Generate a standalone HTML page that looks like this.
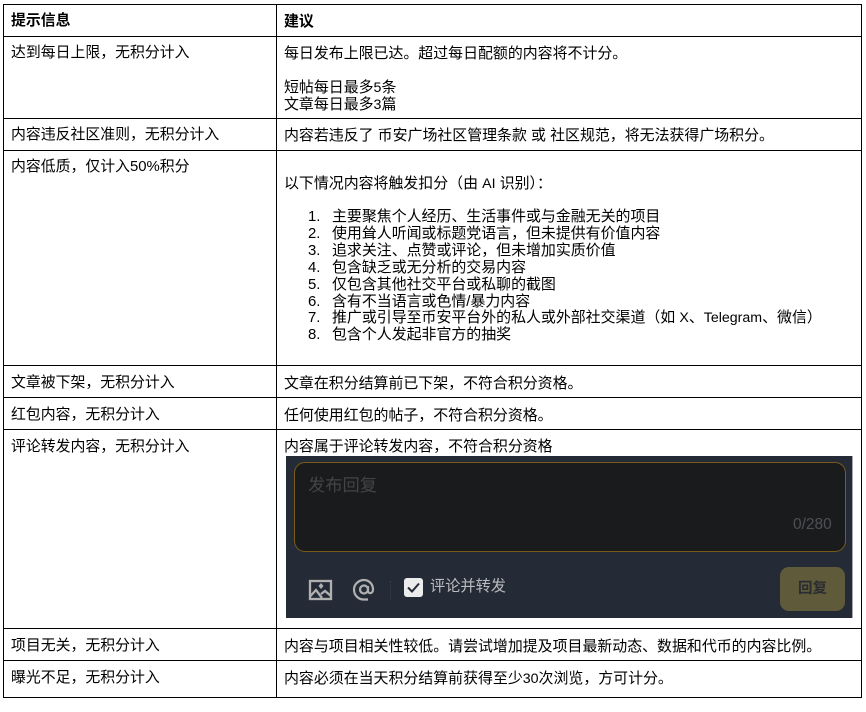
<!DOCTYPE html>
<html lang="zh-CN"><head><meta charset="utf-8"><title>提示信息</title>
<style>
html,body{margin:0;padding:0;background:#fff;}
body{width:866px;height:712px;position:relative;overflow:hidden;font-family:"Liberation Sans","Noto Sans CJK SC",sans-serif;font-size:14.93px;color:#000;}
.h,.v{position:absolute;background:#000;}
.h{left:3px;width:859px;height:1px;}
.v{top:4px;width:1px;height:694px;}
.t{position:absolute;white-space:nowrap;line-height:17px;height:17px;}
.c{font-size:14.88px;left:11px;}
.b{font-weight:bold;}
.n{left:308px;}
.l{left:332px;}
.s{font-size:14.200px;}
#panel{position:absolute;left:286px;top:456px;width:566px;height:162px;background:#252b36;}
#box{position:absolute;left:8px;top:6px;width:550px;height:88px;background:#1a1b1d;border:1px solid #7a5c18;border-radius:11px;}
</style></head><body>
<div class="h" style="top:4px"></div><div class="h" style="top:36px"></div><div class="h" style="top:118px"></div><div class="h" style="top:150px"></div><div class="h" style="top:365px"></div><div class="h" style="top:397px"></div><div class="h" style="top:429px"></div><div class="h" style="top:628px"></div><div class="h" style="top:660px"></div><div class="h" style="top:697px"></div>
<div class="v" style="left:3px"></div><div class="v" style="left:276px"></div><div class="v" style="left:861px"></div>

<div class="t b c" style="top:13px">提示信息</div>
<div class="t b" style="left:284px;top:13px">建议</div>

<div class="t c" style="top:45px">达到每日上限，无积分计入</div>
<div class="t" style="left:284px;top:45px">每日发布上限已达。超过每日配额的内容将不计分。</div>
<div class="t" style="left:284px;top:79px">短帖每日最多<span class="s">5</span>条</div>
<div class="t" style="left:284px;top:96px">文章每日最多<span class="s">3</span>篇</div>

<div class="t c" style="top:127px">内容违反社区准则，无积分计入</div>
<div class="t" style="left:284px;top:127px">内容若违反了 币安广场社区管理条款 或 社区规范，将无法获得广场积分。</div>

<div class="t c" style="top:159px">内容低质，仅计入50%积分</div>
<div class="t" style="left:284px;top:175px">以下情况内容将触发扣分（由 <span class="s">AI</span> 识别）：</div>
<div class="t n" style="top:208px">1.</div><div class="t l" style="top:208px">主要聚焦个人经历、生活事件或与金融无关的项目</div>
<div class="t n" style="top:225px">2.</div><div class="t l" style="top:225px">使用耸人听闻或标题党语言，但未提供有价值内容</div>
<div class="t n" style="top:242px">3.</div><div class="t l" style="top:242px">追求关注、点赞或评论，但未增加实质价值</div>
<div class="t n" style="top:259px">4.</div><div class="t l" style="top:259px">包含缺乏或无分析的交易内容</div>
<div class="t n" style="top:276px">5.</div><div class="t l" style="top:276px">仅包含其他社交平台或私聊的截图</div>
<div class="t n" style="top:293px">6.</div><div class="t l" style="top:293px">含有不当语言或色情/暴力内容</div>
<div class="t n" style="top:309px">7.</div><div class="t l" style="top:309px">推广或引导至币安平台外的私人或外部社交渠道（如 <span class="s">X</span>、<span class="s">Telegram</span>、微信）</div>
<div class="t n" style="top:326px">8.</div><div class="t l" style="top:326px">包含个人发起非官方的抽奖</div>

<div class="t c" style="top:375px">文章被下架，无积分计入</div>
<div class="t" style="left:284px;top:375px">文章在积分结算前已下架，不符合积分资格。</div>
<div class="t c" style="top:407px">红包内容，无积分计入</div>
<div class="t" style="left:284px;top:407px">任何使用红包的帖子，不符合积分资格。</div>
<div class="t c" style="top:439px">评论转发内容，无积分计入</div>
<div class="t" style="left:284px;top:438px">内容属于评论转发内容，不符合积分资格</div>

<div id="panel">
  <div id="box"></div>
  <div class="t" style="left:22px;top:19px;font-size:17.250px;line-height:20px;height:20px;color:#434446">发布回复</div>
  <div class="t" style="left:507px;top:60px;font-size:15.500px;color:#4f5054">0/280</div>
  <svg style="position:absolute;left:22px;top:122px" width="25" height="24" viewBox="0 0 25 24" fill="none" stroke="#b0b0b0" stroke-width="2.300"><rect x="2" y="3" width="21" height="18"/><path d="M2 18.500l6-6.500 6 8M13 16l4-3 6 5"/><path d="M13 5l2.500 3-2.500 3-2.500-3z" fill="#b0b0b0" stroke="none"/></svg>
  <svg style="position:absolute;left:66px;top:122px" width="24" height="24" viewBox="0 0 24 24" fill="none" stroke="#b0b0b0" stroke-width="2.200"><circle cx="12" cy="11.500" r="4"/><path d="M16 8v5c0 3 5 3 5-1.500C21 6 17 2 12 2S2 6 2 11.500 6 21.500 12 21.500h4"/></svg>
  <div style="position:absolute;left:104px;top:125px;width:0;height:18px;border-left:1px dotted #3a404b"></div>
  <div style="position:absolute;left:118px;top:122px;width:19px;height:19px;background:#ececec;border-radius:3px"></div>
  <svg style="position:absolute;left:118px;top:122px" width="19" height="19" viewBox="0 0 19 19" fill="none" stroke="#252b36" stroke-width="2"><path d="M4 9.500l4 4 7-8"/></svg>
  <div class="t" style="left:144px;top:122px;font-size:15.200px;line-height:18px;height:18px;color:#b9bbbe">评论并转发</div>
  <div style="position:absolute;left:494px;top:111px;width:65px;height:44px;background:#5f5a3a;border-radius:9px;color:#2a2c32;font-size:14.500px;font-weight:bold;line-height:44px;text-align:center">回复</div>
</div>
<div style="position:absolute;left:852px;top:456px;width:1px;height:162px;background:#a6a6a6"></div>

<div class="t c" style="top:638px">项目无关，无积分计入</div>
<div class="t" style="left:284px;top:638px">内容与项目相关性较低。请尝试增加提及项目最新动态、数据和代币的内容比例。</div>
<div class="t c" style="top:670px">曝光不足，无积分计入</div>
<div class="t" style="left:284px;top:670px">内容必须在当天积分结算前获得至少<span class="s">30</span>次浏览，方可计分。</div>
</body></html>
